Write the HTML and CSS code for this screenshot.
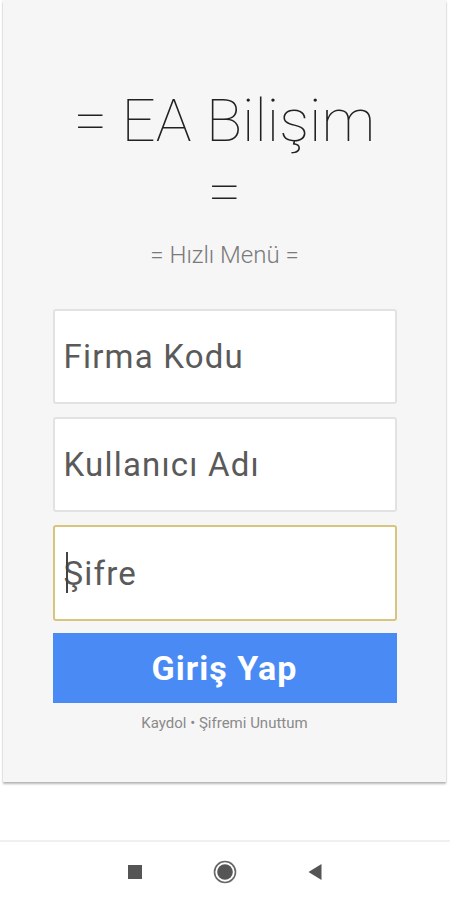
FILE: index.html
```html
<!DOCTYPE html>
<html lang="tr">
<head>
<meta charset="utf-8">
<link rel="stylesheet" href="styles.css">
</head>
<body>
<div class="screen">
  <div class="card">
    <h1 class="title">= EA Bilişim<br>=</h1>
    <div class="subtitle">= Hızlı Menü =</div>
    <form class="form">
      <div class="field">Firma Kodu</div>
      <div class="field">Kullanıcı Adı</div>
      <div class="field focused"><span class="caret"></span>Şifre</div>
      <div class="btn">Giriş Yap</div>
      <div class="links">Kaydol • Şifremi Unuttum</div>
    </form>
  </div>
  <div class="spacer"></div>
  <nav class="navbar">
    <svg class="nav-ico" width="16" height="16" viewBox="0 0 16 16"><rect x="1" y="1" width="14" height="14" fill="#555"/></svg>
    <svg class="nav-ico" width="24" height="24" viewBox="0 0 24 24"><circle cx="12" cy="12" r="10.5" fill="none" stroke="#666" stroke-width="1.6"/><circle cx="12" cy="12" r="7.8" fill="#555"/></svg>
    <svg class="nav-ico" width="16" height="18" viewBox="0 0 16 18"><path d="M1.5 9 L14.5 1 L14.5 17 Z" fill="#555"/></svg>
  </nav>
</div>
</body>
</html>
```
FILE: styles.css
```css
* { box-sizing: border-box; }
html, body { margin: 0; padding: 0; background: #fff; }
body { font-family: Roboto, "Noto Sans", sans-serif; width: 450px; height: 900px; overflow: hidden; }
.screen { display: flex; flex-direction: column; height: 900px; }
.card {
  margin: 0 4px 0 3px;
  height: 782px;
  background: #f6f6f6;
  box-shadow: 0 2px 2px rgba(0,0,0,0.28), 0 0 1px rgba(0,0,0,0.15);
  display: flex;
  flex-direction: column;
  align-items: center;
  padding-top: 85px;
}
.title {
  margin: 0;
  font-weight: 100;
  font-size: 60px;
  line-height: 71px;
  color: #222;
  text-align: center;
}
.subtitle {
  margin-top: 14px;
  font-weight: 300;
  font-size: 24px;
  line-height: 28px;
  color: #7a7a7a;
  text-align: center;
}
.form {
  margin-top: 40px;
  width: 344px;
  display: flex;
  flex-direction: column;
  gap: 13px;
}
.field {
  height: 95px;
  background: #fff;
  border: 2px solid #e2e2e2;
  border-radius: 3px;
  font-size: 33px;
  letter-spacing: 1.2px;
  color: #5a5a5a;
  display: flex;
  align-items: center;
  padding-left: 9px;
  position: relative;
}
.field.focused { border-color: #d8c37f; height: 96px; }
.caret {
  position: absolute;
  left: 11px;
  top: 25px;
  width: 2px;
  height: 41px;
  background: #444;
}
.btn {
  margin-top: -1px;
  height: 70px;
  background: #4a8af4;
  color: #fff;
  font-weight: 700;
  font-size: 34px;
  letter-spacing: 1px;
  display: flex;
  align-items: center;
  justify-content: center;
}
.links {
  margin-top: -2px;
  font-size: 15px;
  line-height: 18px;
  color: #8a8a8a;
  text-align: center;
}
.spacer { flex: 1; }
.navbar {
  height: 60px;
  border-top: 2px solid #f0f0f0;
  display: flex;
  justify-content: center;
  align-items: center;
  padding-top: 2px;
}
.nav-ico { display: block; margin: 0 35px; }
```
